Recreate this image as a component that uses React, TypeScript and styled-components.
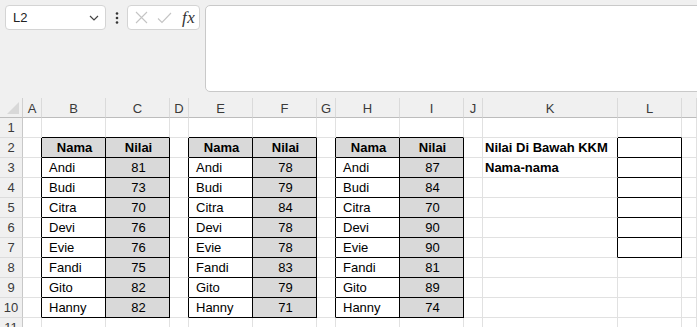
import React from "react";
import styled, { createGlobalStyle } from "styled-components";

const Global = createGlobalStyle`
  html, body { margin: 0; padding: 0; background: #f0f0f0; overflow: hidden; }
  body { width: 697px; height: 327px; font-family: "Liberation Sans", Arial, sans-serif; }
`;

const Page = styled.div`
  width: 697px;
  height: 327px;
  overflow: hidden;
  background: #f0f0f0;
`;

const TopBar = styled.div`
  display: flex;
  align-items: flex-start;
  height: 98px;
  padding: 5px 0 0 5px;
  box-sizing: border-box;
`;

const NameBox = styled.div`
  width: 101px;
  height: 25px;
  box-sizing: border-box;
  background: #fff;
  border: 1px solid #d4d4d4;
  border-radius: 4px;
  display: flex;
  align-items: center;
  justify-content: space-between;
  padding: 0 5px 0 7px;
  font-size: 13px;
  color: #222;
`;

const Dots = styled.div`
  width: 21px;
  height: 25px;
  display: flex;
  align-items: center;
  justify-content: center;
`;

const FxBox = styled.div`
  width: 73px;
  height: 25px;
  box-sizing: border-box;
  background: #fff;
  border: 1px solid #d4d4d4;
  border-radius: 4px;
  display: flex;
  align-items: center;
  gap: 9px;
  padding: 0 0 0 7px;
`;

const FxText = styled.span`
  font-family: "Liberation Serif", "Times New Roman", serif;
  font-style: italic;
  font-size: 17px;
  color: #333;
  letter-spacing: 0.5px;
  margin-left: 1px;
`;

const FormulaInput = styled.div`
  flex: 1;
  margin-left: 5px;
  margin-right: -12px;
  height: 85px;
  background: #fff;
  border: 1px solid #c9c9c9;
  border-radius: 5px;
`;

const Sheet = styled.div`
  display: grid;
  grid-template-columns: 23px 19px 64px 64px 19px 64px 64px 19px 64px 64px 19px 135px 64px 1fr;
  grid-template-rows: 20px;
  grid-auto-rows: 20px;
  background: #fff;
`;

const Corner = styled.div`
  position: relative;
  background: #f0f0f0;
  border-right: 1px solid #d0d0d0;
  border-bottom: 1px solid #bcbcbc;
  box-sizing: border-box;
`;

const CornerTriangle = styled.div`
  position: absolute;
  right: 3px;
  bottom: 3px;
  width: 0;
  height: 0;
  border-left: 12px solid transparent;
  border-bottom: 12px solid #d8d8d8;
`;

const ColHead = styled.div`
  background: #f0f0f0;
  border-right: 1px solid #dadada;
  border-bottom: 1px solid #bcbcbc;
  box-sizing: border-box;
  display: flex;
  align-items: center;
  justify-content: center;
  font-size: 13px;
  color: #3a3a3a;
  padding-top: 1px;
`;

const RowHead = styled.div`
  background: #f0f0f0;
  border-right: 1px solid #c8c8c8;
  border-bottom: 1px solid #dcdcdc;
  box-sizing: border-box;
  display: flex;
  align-items: center;
  justify-content: center;
  font-size: 13px;
  color: #3a3a3a;
`;

const Cell = styled.div<{
  $bg: string;
  $right: string;
  $bottom: string;
  $align: "left" | "center";
  $bold: boolean;
  $indent: number;
}>`
  box-sizing: border-box;
  background: ${(p) => p.$bg};
  border-right: 1px solid ${(p) => p.$right};
  border-bottom: 1px solid ${(p) => p.$bottom};
  display: flex;
  align-items: center;
  justify-content: ${(p) => (p.$align === "center" ? "center" : "flex-start")};
  padding-left: ${(p) => p.$indent}px;
  font-size: 13px;
  font-weight: ${(p) => (p.$bold ? 700 : 400)};
  color: #000;
  white-space: nowrap;
  overflow: visible;
`;

const GRID = "#e1e1e1";
const BLACK = "#000";
const GRAY = "#d9d9d9";

const letters = ["A", "B", "C", "D", "E", "F", "G", "H", "I", "J", "K", "L", ""];

const names = ["Andi", "Budi", "Citra", "Devi", "Evie", "Fandi", "Gito", "Hanny"];
const tables = [
  { nameCol: 2, values: [81, 73, 70, 76, 76, 75, 82, 82] },
  { nameCol: 5, values: [78, 79, 84, 78, 78, 83, 79, 71] },
  { nameCol: 8, values: [87, 84, 70, 90, 90, 81, 89, 74] },
];

const tableCols = new Set<number>();
tables.forEach((t) => {
  tableCols.add(t.nameCol);
  tableCols.add(t.nameCol + 1);
});
const leftOfTable = new Set<number>(tables.map((t) => t.nameCol - 1));

function cellInfo(r: number, c: number) {
  const inTable = r >= 2 && r <= 10 && tableCols.has(c);
  const inBox = c === 12 && r >= 2 && r <= 7;
  let right = GRID;
  let bottom = GRID;
  let bg = "#fff";
  let text = "";
  let align: "left" | "center" = "left";
  let bold = false;
  let indent = 2;

  if (inTable || inBox) {
    right = BLACK;
    bottom = BLACK;
  }
  if (r >= 2 && r <= 10 && leftOfTable.has(c)) right = BLACK;
  if (c === 11 && r >= 2 && r <= 7) right = BLACK;
  if (r === 1 && (tableCols.has(c) || c === 12)) bottom = BLACK;

  if (inTable) {
    const t = tables.find((tb) => tb.nameCol === c || tb.nameCol + 1 === c)!;
    const isValue = c === t.nameCol + 1;
    if (r === 2) {
      bg = GRAY;
      text = isValue ? "Nilai" : "Nama";
      bold = true;
      align = "center";
    } else {
      const i = r - 3;
      if (isValue) {
        bg = GRAY;
        text = String(t.values[i]);
        align = "center";
      } else {
        text = names[i];
        indent = 7;
      }
    }
  }
  if (c === 11 && r === 2) {
    text = "Nilai Di Bawah KKM";
    bold = true;
  }
  if (c === 11 && r === 3) {
    text = "Nama-nama";
    bold = true;
  }
  return { right, bottom, bg, text, align, bold, indent };
}

function ChevronDown() {
  return (
    <svg width="12" height="12" viewBox="0 0 12 12">
      <path d="M2 4 L6 8 L10 4" fill="none" stroke="#444" strokeWidth="1.2" />
    </svg>
  );
}

function VDots() {
  return (
    <svg width="4" height="12" viewBox="0 0 4 12">
      <circle cx="2" cy="1.5" r="1.3" fill="#333" />
      <circle cx="2" cy="6" r="1.3" fill="#333" />
      <circle cx="2" cy="10.5" r="1.3" fill="#333" />
    </svg>
  );
}

function XIcon() {
  return (
    <svg width="13" height="13" viewBox="0 0 13 13">
      <path d="M1 1 L12 12 M12 1 L1 12" stroke="#c4c4c4" strokeWidth="1.1" fill="none" />
    </svg>
  );
}

function CheckIcon() {
  return (
    <svg width="15" height="12" viewBox="0 0 15 12">
      <path d="M1 6.5 L5 10.5 L14 1" stroke="#c4c4c4" strokeWidth="1.1" fill="none" />
    </svg>
  );
}

export default function App() {
  const rows = Array.from({ length: 11 }, (_, i) => i + 1);
  const cols = Array.from({ length: 13 }, (_, i) => i + 1);
  return (
    <Page>
      <Global />
      <TopBar>
        <NameBox>
          <span>L2</span>
          <ChevronDown />
        </NameBox>
        <Dots>
          <VDots />
        </Dots>
        <FxBox>
          <XIcon />
          <CheckIcon />
          <FxText>fx</FxText>
        </FxBox>
        <FormulaInput />
      </TopBar>
      <Sheet>
        <Corner>
          <CornerTriangle />
        </Corner>
        {letters.map((l, i) => (
          <ColHead key={"h" + i}>{l}</ColHead>
        ))}
        {rows.map((r) => (
          <React.Fragment key={"r" + r}>
            <RowHead>{r}</RowHead>
            {cols.map((c) => {
              const info = cellInfo(r, c);
              return (
                <Cell
                  key={c}
                  $bg={info.bg}
                  $right={info.right}
                  $bottom={info.bottom}
                  $align={info.align}
                  $bold={info.bold}
                  $indent={info.indent}
                >
                  {info.text}
                </Cell>
              );
            })}
          </React.Fragment>
        ))}
      </Sheet>
    </Page>
  );
}
